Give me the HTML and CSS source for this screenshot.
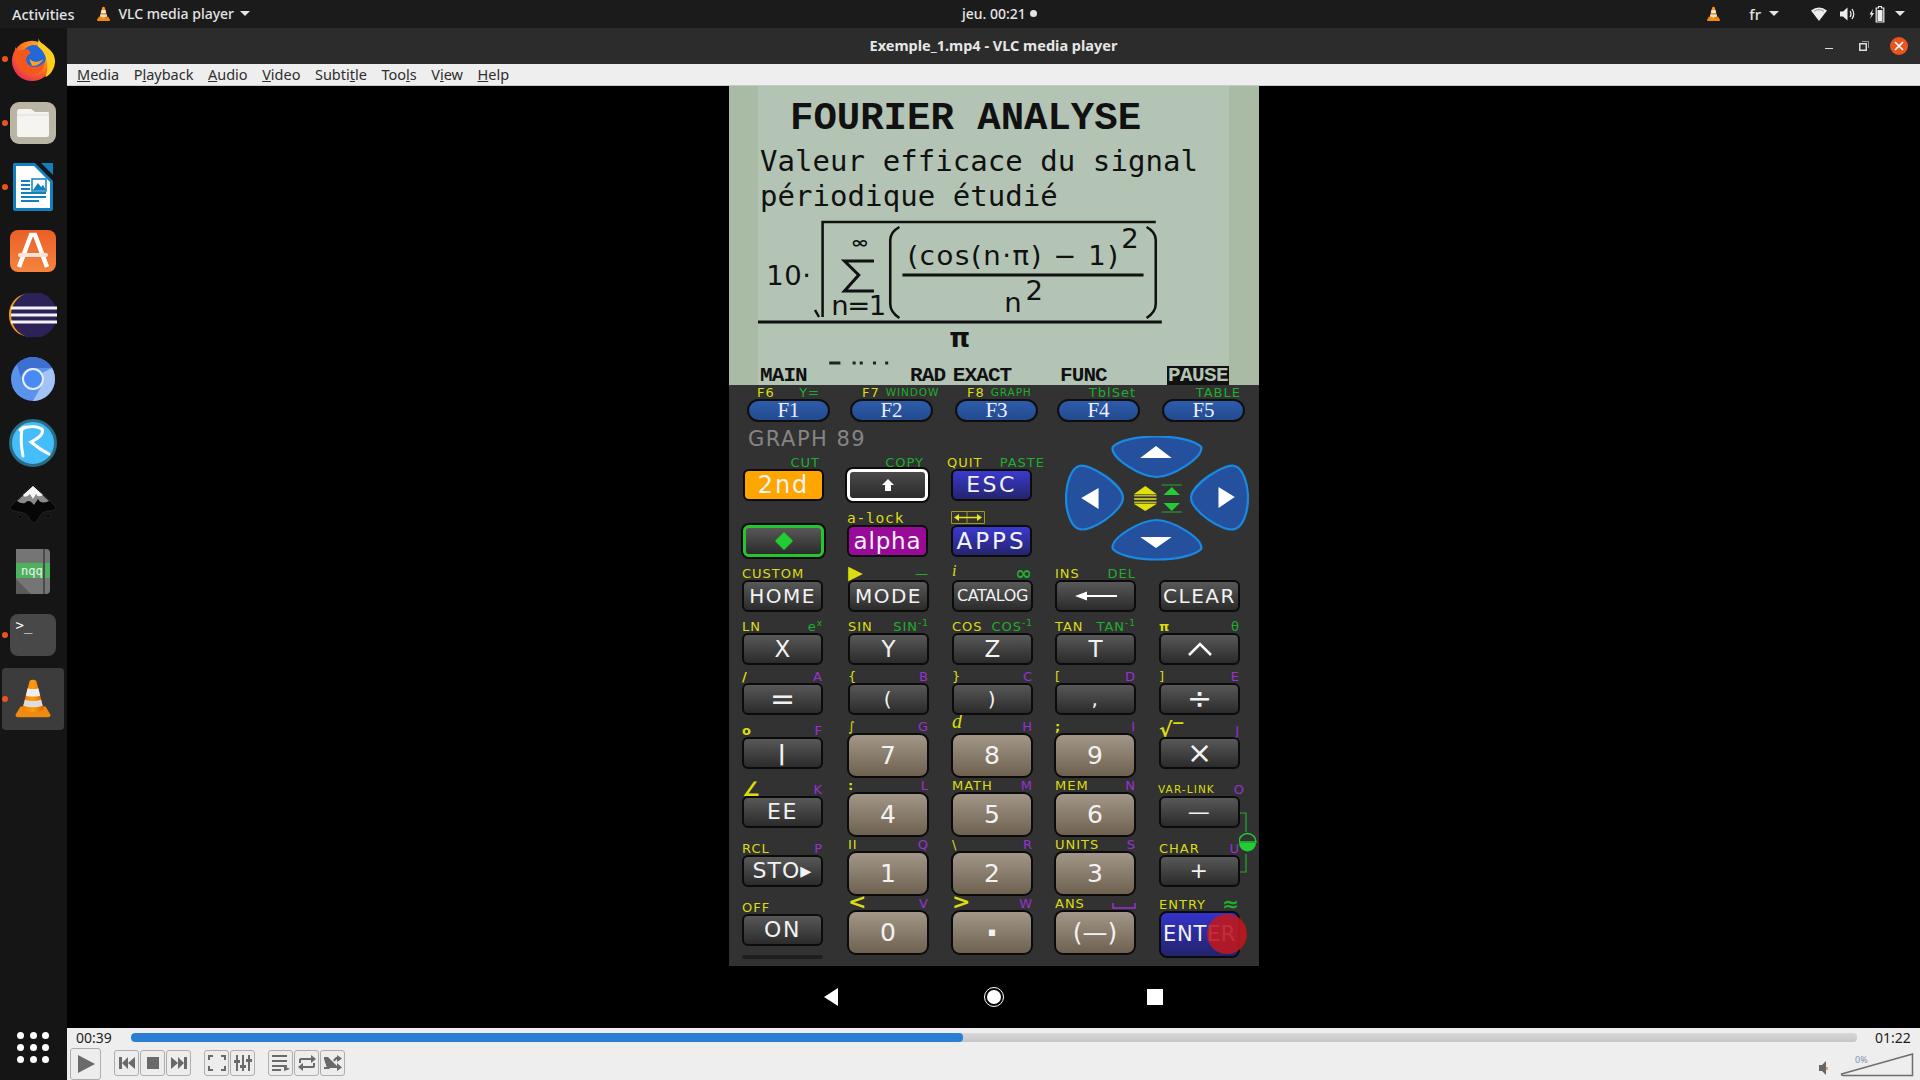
FILE: index.html
```html
<!DOCTYPE html>
<html lang="fr">
<head>
<meta charset="utf-8">
<title>Exemple_1.mp4 - VLC media player</title>
<link rel="stylesheet" href="styles.css">
</head>
<body>
<svg class="defs" width="0" height="0">
  <defs>
    <linearGradient id="cone" x1="0" y1="0" x2="1" y2="0"><stop offset="0" stop-color="#f08000"/><stop offset=".5" stop-color="#ff9a10"/><stop offset="1" stop-color="#d86800"/></linearGradient>
    <radialGradient id="ffx" cx=".7" cy=".25" r=".9"><stop offset="0" stop-color="#ffc21c"/><stop offset=".5" stop-color="#ff7a1a"/><stop offset="1" stop-color="#e3205a"/></radialGradient>
    <linearGradient id="orange" x1="0" y1="0" x2="0" y2="1"><stop offset="0" stop-color="#ea5f27"/><stop offset="1" stop-color="#f5843e"/></linearGradient>
    <symbol id="vlc" viewBox="0 0 48 48">
      <path d="M3 43 L9 33 H39 L45 43 Q45 46 42 46 H6 Q3 46 3 43Z" fill="#f08a10"/>
      <path d="M20 2 Q24 0 28 2 L37 37 Q24 43 11 37Z" fill="url(#cone)"/>
      <path d="M17.600 11 Q24 13 30.400 11 L32.600 20 Q24 22 15.400 20Z" fill="#eee"/>
      <path d="M14.300 25 Q24 28 33.700 25 L35.600 32 Q24 36 12.400 32Z" fill="#ddd"/>
    </symbol>
  </defs>
</svg>

<header class="topbar">
  <div class="top-left">
    <span class="activities">Activities</span>
    <svg class="top-cone" width="15" height="16"><use href="#vlc"/></svg>
    <span>VLC media player</span>
    <span class="caret caret-app"></span>
  </div>
  <div class="clock">jeu. 00:21 <span class="clock-dot"></span></div>
  <div class="top-right">
    <svg class="tr-cone" width="15" height="16"><use href="#vlc"/></svg>
    <span class="tr-fr">fr</span>
    <span class="caret caret-fr"></span>
    <svg class="tr-wifi" width="16" height="14" viewBox="0 0 24 16" preserveAspectRatio="none"><path d="M0 4 Q12 -3 24 4 L12 16Z" fill="#eee"/><path d="M4.500 5 Q12 1 19.500 5" stroke="#777" fill="none"/></svg>
    <svg class="tr-vol" width="15" height="14" viewBox="0 0 15 14"><path d="M0 4.500 H3 L7.500 .500 V13.500 L3 9.500 H0Z" fill="#eee"/><path d="M10 4 Q12 7 10 10 M12 2 Q15.500 7 12 12" stroke="#eee" stroke-width="1.300" fill="none"/></svg>
    <svg class="tr-bat" width="16" height="18" viewBox="0 0 16 18"><path d="M4 4 L0.500 9.500 H2.500 L1 14 L5 8 H3Z" fill="#eee"/><path d="M9.500 1.500 H12.500 V3 H14.800 V17 H7.200 V3 H9.500Z" fill="none" stroke="#eee" stroke-width="1.200"/><rect x="8.500" y="5" width="5" height="11" fill="#eee"/></svg>
    <span class="caret caret-end"></span>
  </div>
</header>

<div class="main">
  <nav class="dock">
    <div class="dock-item running">
      <svg width="46" height="46" viewBox="0 0 48 48"><circle cx="23" cy="26" r="21" fill="url(#ffx)"/><circle cx="25" cy="22" r="12.500" fill="#2468d8"/><path d="M30 2 C30 10 47 12 47 26 C47 33 43 40 37 43 C42 30 37 16 29 11Z" fill="#ffcc1f"/><path d="M6 11 C6 18 14 13 19 14 L22 18 C15 20 15 30 23 32 C28 33 33 31 36 27 C36 36 28 41 20 40 C9 38 2 24 6 11Z" fill="#f4581e"/><path d="M20 24 Q27 30 35 24 Q30 32 23 31Z" fill="#ffa01f"/></svg>
    </div>
    <div class="dock-item running">
      <svg width="46" height="42" viewBox="0 0 46 42"><rect width="46" height="42" rx="9" fill="#b9b4a4"/><path d="M7 10 Q7 7 10 7 H21 L25 10 H38 Q39 10 39 12 V33 Q39 35 37 35 H9 Q7 35 7 33Z" fill="#f6f4f1"/><path d="M7 13 H39" stroke="#e0ddd6"/></svg>
    </div>
    <div class="dock-item running">
      <svg width="40" height="48" viewBox="0 0 40 48"><path d="M1 0 H22 L40 18 V46 Q40 48 38 48 H2 Q0 48 0 46 V1Z" fill="#1280bf"/><path d="M3 3 H21 L37 19 V45 H3Z" fill="#fff"/><path d="M28 0 H40 V12Z" fill="#1280bf"/><path d="M8 18 H17 M8 22 H17 M8 26 H17 M8 30 H33 M8 34 H33 M8 38 H26" stroke="#1280bf" stroke-width="2"/><rect x="19" y="16" width="14" height="12" fill="#fff" stroke="#1280bf" stroke-width="1.500"/><path d="M20 27 L25 20 L28 24 L30 22 L33 27Z" fill="#1280bf"/></svg>
    </div>
    <div class="dock-item">
      <svg width="46" height="42" viewBox="0 0 46 42"><rect width="46" height="42" rx="8" fill="url(#orange)"/><path d="M9 37 L21 5 H25 L37 37" fill="none" stroke="#fff" stroke-width="4.500"/><path d="M10 25 H36" stroke="#fde4d6" stroke-width="4" stroke-linecap="round"/></svg>
    </div>
    <div class="dock-item">
      <svg width="48" height="44" viewBox="0 0 48 44"><path d="M24 0 C6 0 0 12 0 22 C0 32 6 44 24 44 C12 40 8 32 8 22 C8 12 12 4 24 0Z" fill="#f29a12"/><circle cx="25" cy="22" r="23" fill="#2c2258"/><path d="M2 15 H48 M2 22 H48 M2 29 H48" stroke="#f4f2f8" stroke-width="3"/></svg>
    </div>
    <div class="dock-item">
      <svg width="44" height="44" viewBox="0 0 44 44"><circle cx="22" cy="22" r="22" fill="#5b93ec"/><path d="M6 7 A22 22 0 0 1 41 11 H22 A11 11 0 0 0 12 28Z" fill="#3c6fd0"/><path d="M41 11 A22 22 0 0 1 22 44 L31 28 A11 11 0 0 0 31 16Z" fill="#a3c2f5"/><circle cx="22" cy="22" r="10" fill="#4a8af4" stroke="#e8effb" stroke-width="2"/></svg>
    </div>
    <div class="dock-item">
      <svg width="48" height="48" viewBox="0 0 48 48"><circle cx="24" cy="24" r="22.500" fill="#46bdfb" stroke="#2a6c86" stroke-width="3"/><path d="M14 37 Q11 22 13 10 Q24 5 33 10 Q36 16 22 23 Q30 30 40 35 M11 11 Q14 8 18 8" fill="none" stroke="#fff" stroke-width="3" stroke-linecap="round"/></svg>
    </div>
    <div class="dock-item">
      <svg width="46" height="46" viewBox="0 0 46 46"><path d="M23 0 L46 23 Q46 27 38 27 Q31 28 29 34 Q24 44 19 34 Q17 29 9 28 Q0 27 0 23Z" fill="#060606" stroke="#333" stroke-width=".600"/><path d="M23 2 L39 17 Q31 21 28 15 L24 21 Q19 14 15 19 Q11 20 7 17Z" fill="#8a8a8a"/><path d="M23 2 L33 11 Q28 14 26 10 L23 15 L20 10 Q15 15 13 11Z" fill="#f5f5f5"/><circle cx="10" cy="33" r="2" fill="#060606" stroke="#333" stroke-width=".500"/><circle cx="38" cy="32" r="2" fill="#060606" stroke="#333" stroke-width=".500"/></svg>
    </div>
    <div class="dock-item">
      <svg width="34" height="45" viewBox="0 0 34 45"><path d="M0 0 H30 Q34 0 34 4 V41 Q34 45 30 45 H0Z" fill="#757575"/><path d="M0 30 L15 45 H0Z" fill="#5a5a5a"/><rect y="14" width="34" height="15" fill="#4cb25b"/><path d="M28 0 V45" stroke="#4b4b4b" stroke-width="2"/><text class="nqq" x="5" y="26">nqq</text></svg>
    </div>
    <div class="dock-item running">
      <div class="term">&gt;_</div>
    </div>
    <div class="dock-item running active">
      <svg width="40" height="46"><use href="#vlc"/></svg>
    </div>
    <div class="dock-fill"></div>
    <div class="apps-grid"><i></i><i></i><i></i><i></i><i></i><i></i><i></i><i></i><i></i></div>
  </nav>

  <div class="window">
    <div class="titlebar">
      <span class="title">Exemple_1.mp4 - VLC media player</span>
      <div class="wbtns">
        <span class="w-min"></span>
        <svg class="w-max" width="10" height="10" viewBox="0 0 10 10"><path d="M.750 2.750 H7.250 V9.250 H.750Z" fill="none" stroke="#ddd" stroke-width="1.500"/><path d="M3 .500 H9.500 V7" fill="none" stroke="#999"/></svg>
        <span class="w-close"><svg width="12" height="12" viewBox="0 0 12 12"><path d="M2 2 L10 10 M10 2 L2 10" stroke="#fff" stroke-width="1.700"/></svg></span>
      </div>
    </div>
    <div class="menubar">
      <span><u>M</u>edia</span>
      <span>P<u>l</u>ayback</span>
      <span><u>A</u>udio</span>
      <span><u>V</u>ideo</span>
      <span>Subti<u>t</u>le</span>
      <span>Too<u>l</u>s</span>
      <span>V<u>i</u>ew</span>
      <span><u>H</u>elp</span>
    </div>

    <main class="video">
      <div class="phone">
        <section class="calc">
          <div class="lcd">
            <div class="lcd-inner">
              <div class="lcd-title">FOURIER ANALYSE</div>
              <div class="lcd-line">Valeur efficace du signal</div>
              <div class="lcd-line">périodique étudié</div>
              <svg class="formula" width="471" height="147" viewBox="758 218 463 147" preserveAspectRatio="none">
                <text class="m" x="766" y="285" textLength="44">10·</text>
                <path d="M814 310 L818 317 M821.500 317 V222 H1149" fill="none" stroke="#111" stroke-width="2.500"/>
                <text class="ms" x="849" y="248" textLength="18" lengthAdjust="spacingAndGlyphs">∞</text>
                <path d="M872 261 H843 L857 275 L843 291 H872" fill="none" stroke="#111" stroke-width="3"/>
                <text class="m" x="830" y="315" textLength="54">n=1</text>
                <path d="M897 227 Q888 232 888 240 V304 Q888 312 897 318 M1140 227 Q1149 232 1149 240 V304 Q1149 312 1140 318" fill="none" stroke="#111" stroke-width="2.500"/>
                <text class="m" x="905" y="265" textLength="207">(cos(n·π) − 1)</text>
                <text class="m" x="1115" y="248">2</text>
                <path d="M900 275 H1137" stroke="#111" stroke-width="3"/>
                <text class="m" x="1000" y="312">n</text>
                <text class="m" x="1021" y="300">2</text>
                <path d="M758 322 H1155" stroke="#111" stroke-width="3"/>
                <text class="mb" x="946" y="347">π</text>
                <path d="M828 363 H839 M851 363 H854 M858 363 H861 M871 363 H874 M883 363 H886" stroke="#222" stroke-width="3"/>
              </svg>
              <div class="lcd-status">
                <span>MAIN</span><span>RAD EXACT</span><span>FUNC</span><span class="inv">PAUSE</span>
              </div>
            </div>
          </div>

          <div class="fkeys">
            <div class="cell"><div class="lab pad-a"><span class="y">F6</span><span class="g">Y=</span></div><div class="fk">F1</div></div>
            <div class="cell"><div class="lab pad-b"><span class="y">F7</span><span class="g sm">WINDOW</span></div><div class="fk">F2</div></div>
            <div class="cell"><div class="lab pad-b"><span class="y">F8</span><span class="g sm">GRAPH</span></div><div class="fk">F3</div></div>
            <div class="cell"><div class="lab pad-c"><span class="g">TblSet</span></div><div class="fk">F4</div></div>
            <div class="cell"><div class="lab pad-c"><span class="g">TABLE</span></div><div class="fk">F5</div></div>
          </div>

          <div class="upper">
            <div class="upper-left">
              <div class="brand">GRAPH 89</div>
              <div class="upper-grid">
                <div class="cell"><div class="lab end"><span class="g">CUT</span></div><div class="key orange">2nd</div></div>
                <div class="cell"><div class="lab end"><span class="g">COPY</span></div><div class="key outlined"><svg width="14" height="14" viewBox="0 0 14 14"><path d="M7 1 L13 7 H10 V13 H4 V7 H1Z" fill="#fff"/></svg></div></div>
                <div class="cell cell-wide"><div class="lab"><span class="y">QUIT</span><span class="g">PASTE</span></div><div class="key blue esc">ESC</div></div>
                <div class="cell"><div class="key diamond"><svg width="20" height="20" viewBox="0 0 20 20"><path d="M10 1 L19 10 L10 19 L1 10Z" fill="#22cc33"/></svg></div></div>
                <div class="cell"><div class="lab"><span class="y mono">a-lock</span></div><div class="key purple">alpha</div></div>
                <div class="cell"><div class="lab"><svg width="34" height="13" viewBox="0 0 34 13"><path d="M.500 .500 H33.500 V12.500 H.500Z M16 .500 V12.500" fill="none" stroke="#9a9a20"/><path d="M3 6.500 L8 3 V10Z M31 6.500 L26 3 V10Z" fill="#e6e61e"/><path d="M8 6.500 H26" stroke="#e6e61e" stroke-width="1.500"/></svg></div><div class="key blue apps">APPS</div></div>
              </div>
            </div>
            <svg class="dpad" width="184" height="126" viewBox="1060 436 181 126" preserveAspectRatio="none">
              <g class="dp">
                <path d="M1107 447 C1120 433 1180 433 1194 447 C1196 458 1165 477 1150 477 C1135 477 1104 458 1107 447Z"/>
                <path d="M1074 466 C1085 463 1117 485 1117 498 C1117 511 1085 533 1074 529 C1066 527 1061 512 1061 498 C1061 484 1066 468 1074 466Z"/>
                <path d="M1227 466 C1216 463 1184 485 1184 498 C1184 511 1216 533 1227 529 C1235 527 1240 512 1240 498 C1240 484 1235 468 1227 466Z"/>
                <path d="M1150 520 C1165 520 1196 538 1194 549 C1180 563 1120 563 1107 549 C1104 538 1135 520 1150 520Z"/>
              </g>
              <path d="M1134 458 H1165 L1149.500 446Z M1076 498 L1093 488 V509Z M1211 487 V508 L1227 497Z M1134 537 H1165 L1149.500 548Z" fill="#fff"/>
              <path d="M1139 486 L1128 494 H1150Z M1128 504 H1150 L1139 511Z" fill="#e0e010"/>
              <path d="M1128 495.500 H1150 M1128 499 H1150 M1128 502.500 H1150" stroke="#b8b820" stroke-width="2"/>
              <path d="M1165 487 L1157 495 H1173Z M1157 503 H1173 L1165 511Z" fill="#22cc33"/>
              <path d="M1155 485 H1175 M1155 512 H1175" stroke="#22aa33"/>
            </svg>
          </div>

          <div class="keypad">
            <div class="cell"><div class="lab"><span class="y">CUSTOM</span></div><div class="key">HOME</div></div>
            <div class="cell"><div class="lab"><span class="y tri">▶</span><span class="g">—</span></div><div class="key">MODE</div></div>
            <div class="cell"><div class="lab"><span class="y serif">i</span><span class="g big">∞</span></div><div class="key catalog">CATALOG</div></div>
            <div class="cell"><div class="lab"><span class="y">INS</span><span class="g">DEL</span></div><div class="key"><svg width="42" height="10" viewBox="0 0 42 10"><path d="M0 5 L12 .500 V4 H42 V6 H12 V9.500Z" fill="#fff"/></svg></div></div>
            <div class="cell"><div class="key">CLEAR</div></div>

            <div class="cell"><div class="lab"><span class="y">LN</span><span class="g">e<sup>x</sup></span></div><div class="key letter">X</div></div>
            <div class="cell"><div class="lab"><span class="y">SIN</span><span class="g">SIN<sup>-1</sup></span></div><div class="key letter">Y</div></div>
            <div class="cell"><div class="lab"><span class="y">COS</span><span class="g">COS<sup>-1</sup></span></div><div class="key letter">Z</div></div>
            <div class="cell"><div class="lab"><span class="y">TAN</span><span class="g">TAN<sup>-1</sup></span></div><div class="key letter">T</div></div>
            <div class="cell"><div class="lab"><span class="y bold">π</span><span class="g">θ</span></div><div class="key"><svg width="24" height="14" viewBox="0 0 24 14"><path d="M1 13 L12 2 L23 13" fill="none" stroke="#fff" stroke-width="2.500"/></svg></div></div>

            <div class="cell"><div class="lab"><span class="y bold">/</span><span class="p">A</span></div><div class="key sym">=</div></div>
            <div class="cell"><div class="lab"><span class="y">{</span><span class="p">B</span></div><div class="key">(</div></div>
            <div class="cell"><div class="lab"><span class="y">}</span><span class="p">C</span></div><div class="key">)</div></div>
            <div class="cell"><div class="lab"><span class="y">[</span><span class="p">D</span></div><div class="key">,</div></div>
            <div class="cell"><div class="lab"><span class="y">]</span><span class="p">E</span></div><div class="key sym">÷</div></div>

            <div class="cell"><div class="lab"><span class="y bold">o</span><span class="p">F</span></div><div class="key raised bar">|</div></div>
            <div class="cell"><div class="lab"><span class="y">∫</span><span class="p">G</span></div><div class="key digit">7</div></div>
            <div class="cell"><div class="lab"><span class="y serif big">d</span><span class="p">H</span></div><div class="key digit">8</div></div>
            <div class="cell"><div class="lab"><span class="y bold">;</span><span class="p">I</span></div><div class="key digit">9</div></div>
            <div class="cell"><div class="lab"><span class="y big">√‾</span><span class="p">J</span></div><div class="key raised sym">×</div></div>

            <div class="cell"><div class="lab"><span class="y big">∠</span><span class="p">K</span></div><div class="key raised">EE</div></div>
            <div class="cell"><div class="lab"><span class="y bold">:</span><span class="p">L</span></div><div class="key digit">4</div></div>
            <div class="cell"><div class="lab"><span class="y">MATH</span><span class="p">M</span></div><div class="key digit">5</div></div>
            <div class="cell"><div class="lab"><span class="y">MEM</span><span class="p">N</span></div><div class="key digit">6</div></div>
            <div class="cell"><div class="lab lab-over"><span class="y var">VAR-LINK</span><span class="p">O</span></div><div class="key raised">—</div></div>

            <div class="cell"><div class="lab"><span class="y">RCL</span><span class="p">P</span></div><div class="key raised sto">STO▸</div></div>
            <div class="cell"><div class="lab"><span class="y">II</span><span class="p">Q</span></div><div class="key digit">1</div></div>
            <div class="cell"><div class="lab"><span class="y">\</span><span class="p">R</span></div><div class="key digit">2</div></div>
            <div class="cell"><div class="lab"><span class="y">UNITS</span><span class="p">S</span></div><div class="key digit">3</div></div>
            <div class="cell"><div class="lab"><span class="y">CHAR</span><span class="p">U</span></div><div class="key raised">+</div></div>

            <div class="cell"><div class="lab"><span class="y">OFF</span></div><div class="key raised">ON</div><div class="key-slot"></div></div>
            <div class="cell"><div class="lab"><span class="y tall">&lt;</span><span class="p">V</span></div><div class="key digit">0</div></div>
            <div class="cell"><div class="lab"><span class="y tall">&gt;</span><span class="p">W</span></div><div class="key digit dot">·</div></div>
            <div class="cell"><div class="lab"><span class="y">ANS</span><svg width="24" height="6" viewBox="0 0 24 6"><path d="M1 0 V5 H23 V0" fill="none" stroke="#9a30d6" stroke-width="1.500"/></svg></div><div class="key digit">(—)</div></div>
            <div class="cell"><div class="lab"><span class="y">ENTRY</span><span class="g big">≈</span></div><div class="key enter">ENTER<span class="touch"></span></div></div>

            <svg class="bracket" width="18" height="62" viewBox="0 0 18 62"><path d="M1 1 H7 V20 M7 42 V60 H1" fill="none" stroke="#22aa33" stroke-width="1.200"/><path d="M0 30 A8.500 8.500 0 0 1 17 30Z" fill="none" stroke="#22cc33" stroke-width="1.500"/><path d="M0 31 H17 A8.500 8.500 0 0 1 0 31Z" fill="#22cc33"/></svg>
          </div>
        </section>
        <div class="android">
          <svg width="20" height="20" viewBox="0 0 20 20"><path d="M15 1 V19 L1 10Z" fill="#fff"/></svg>
          <svg width="20" height="20" viewBox="0 0 20 20"><circle cx="10" cy="10" r="9.500" fill="none" stroke="#fff"/><circle cx="10" cy="10" r="7" fill="#fff"/></svg>
          <svg width="20" height="20" viewBox="0 0 20 20"><rect x="2" y="2" width="16" height="16" fill="#fff"/></svg>
        </div>
      </div>
    </main>

    <footer class="controls">
      <div class="seek">
        <span class="time">00:39</span>
        <div class="track"><div class="fill" style="width:48.200%"></div></div>
        <span class="time time-end">01:22</span>
      </div>
      <div class="buttons">
        <div class="cb cb-play"><svg width="20" height="20" viewBox="0 0 20 20"><path d="M2 1 L19 10 L2 19Z"/></svg></div>
        <div class="group">
          <div class="cb"><svg width="16" height="12" viewBox="0 0 16 12"><path d="M0 0 H3 V12 H0Z M3 6 L9 0 V12Z M9 6 L16 0 V12Z"/></svg></div>
          <div class="cb"><svg width="12" height="12" viewBox="0 0 12 12"><rect width="12" height="12"/></svg></div>
          <div class="cb"><svg width="16" height="12" viewBox="0 0 16 12"><path d="M0 0 L7 6 L0 12Z M7 0 L13 6 L7 12Z M13 0 H16 V12 H13Z"/></svg></div>
        </div>
        <div class="group">
          <div class="cb"><svg width="18" height="16" viewBox="0 0 18 16"><path d="M0 5 V0 H5 V2 H2 V5Z M13 0 H18 V5 H16 V2 H13Z M0 11 H2 V14 H5 V16 H0Z M16 11 H18 V16 H13 V14 H16Z"/></svg></div>
          <div class="cb"><svg width="18" height="16" viewBox="0 0 18 16"><path d="M2 0 H4 V16 H2Z M0 5 H6 V8 H0Z M8 0 H10 V16 H8Z M6 10 H12 V13 H6Z M14 0 H16 V16 H14Z M12 4 H18 V7 H12Z"/></svg></div>
        </div>
        <div class="group">
          <div class="cb"><svg width="18" height="16" viewBox="0 0 18 16"><path d="M0 0 H15 V2 H0Z M0 5 H15 V7 H0Z M0 10 H15 V12 H0Z M0 14 H9 V16 H0Z M12 11 L18 14 L12 16Z"/></svg></div>
          <div class="cb"><svg width="18" height="16" viewBox="0 0 18 16"><path d="M1 8 V5 Q1 3 3 3 H13 V0 L18 4 L13 8 V5 H3 V8Z M17 8 V11 Q17 13 15 13 H5 V16 L0 12 L5 8 V11 H15 V8Z"/></svg></div>
          <div class="cb"><svg width="18" height="16" viewBox="0 0 18 16"><path d="M0 2 H4 L13 11 V8 L18 12.500 L13 16 V13 H3 L0 4Z M0 12 H4 L7 9 L8.500 10.500 L5 14 H0Z M9 5 L12 2 H13 V0 L18 3.500 L13 7 V4 L10.500 6.500Z"/></svg></div>
        </div>
        <div class="spacer"></div>
        <svg class="speaker" width="9" height="14" viewBox="0 0 9 14"><path d="M0 4 H3 L7 0 V14 L3 10 H0Z" fill="#666"/><path d="M8 6 V9" stroke="#e98a2a" stroke-width="1.500"/></svg>
        <div class="volume">
          <svg width="74" height="24" viewBox="0 0 74 24"><path d="M1.500 21 L72.500 1 V22.500 H3 Q1.500 22.500 1.500 21Z" fill="none" stroke="#6e6e6e" stroke-width="1.500"/></svg>
          <span class="vol-text">0%</span>
        </div>
      </div>
    </footer>
  </div>
</div>
</body>
</html>
```
FILE: styles.css
```css
* { box-sizing: border-box; }
html, body { margin: 0; height: 100%; }
body {
  width: 1920px; height: 1080px; overflow: hidden;
  display: flex; flex-direction: column;
  background: #000;
  font-family: "Noto Sans", "Open Sans", sans-serif;
}
.defs { position: absolute; }

/* ---- top bar ---- */
.topbar {
  height: 28px; flex: none;
  display: flex; align-items: center;
  background: #1b1b1b; color: #e4e4e4;
  font-size: 14px; font-weight: 500;
  padding-bottom: 1px;
}
.top-left { width: 962px; display: flex; align-items: center; }
.activities { margin-left: 12px; margin-right: 22px; font-size: 14.500px; }
.top-cone { margin-right: 7px; }
.caret {
  width: 0; height: 0;
  border-left: 5px solid transparent; border-right: 5px solid transparent;
  border-top: 5px solid #e4e4e4;
}
.caret-app { margin-left: 6px; }
.clock { display: flex; align-items: center; gap: 4px; }
.clock-dot { width: 7px; height: 7px; border-radius: 50%; background: #e4e4e4; }
.top-right { margin-left: auto; display: flex; align-items: center; padding-right: 15px; }
.tr-fr { margin-left: 28px; font-size: 15px; }
.caret-fr { margin-left: 8px; }
.tr-wifi { margin-left: 32px; }
.tr-vol { margin-left: 13px; }
.tr-bat { margin-left: 14px; }
.caret-end { margin-left: 10px; }

/* ---- layout ---- */
.main { flex: 1; display: flex; min-height: 0; }
.dock {
  width: 67px; flex: none;
  display: flex; flex-direction: column;
  background: #151515;
  padding-bottom: 17px;
}
.dock-item {
  position: relative;
  height: 64px; flex: none;
  display: flex; align-items: center; justify-content: center;
  margin-top: 0; padding-right: 2px;
  top: -1px;
}
.dock-item svg { display: block; }
.dock-item.running::before {
  content: ""; position: absolute; left: 2px; top: 29px;
  width: 6px; height: 6px; border-radius: 50%; background: #e95420;
}
.dock-item.active { margin: 1px 3px 0 2px; padding-right: 0; background: #3c3c3c; border-radius: 4px; height: 62px; }
.dock-item.active::before { left: 0; top: 28px; }
.term {
  width: 46px; height: 42px; border-radius: 8px;
  background: #484848; color: #fff;
  font: 14px/22px "DejaVu Sans Mono", monospace; padding-left: 6px;
}
.nqq { font: 12px "DejaVu Sans Mono", monospace; fill: #f0f0f0; }
.dock-fill { flex: 1; }
.apps-grid {
  width: 32px; margin-left: 17px;
  display: grid; grid-template-columns: repeat(3, 7px); gap: 5px 5.500px;
}
.apps-grid i { width: 7px; height: 7px; border-radius: 50%; background: #fff; }

.window { flex: 1; min-width: 0; display: flex; flex-direction: column; }
.titlebar {
  height: 36px; flex: none;
  display: flex; align-items: center; justify-content: center;
  position: relative;
  background: #2d2c2c; color: #e6e6e6;
  font-size: 14.500px; font-weight: 700;
  padding-bottom: 2px;
}
.wbtns { position: absolute; right: 12px; top: 0; height: 36px; display: flex; align-items: center; }
.w-min { width: 8px; height: 1px; background: #ddd; margin-top: 4px; margin-right: 26px; }
.w-max { margin-right: 21px; }
.w-close {
  width: 18px; height: 18px; border-radius: 50%; background: #e95420;
  display: flex; align-items: center; justify-content: center;
}
.menubar {
  height: 22px; flex: none;
  display: flex; align-items: center; gap: 14.500px;
  padding-left: 10px; padding-bottom: 2px;
  background: #eeeeee; color: #2e2e2e;
  border-bottom: 1px solid #c9c9c9;
  font-size: 14.500px;
}
.video { flex: 1; min-height: 0; display: flex; justify-content: center; background: #000; }
.phone { width: 530px; margin-left: 1px; display: flex; flex-direction: column; }

/* ---- calculator ---- */
.calc {
  height: 880px; flex: none;
  display: flex; flex-direction: column;
  background: #323232;
  font-family: "DejaVu Sans", sans-serif;
  position: relative;
}
.lcd { height: 299px; flex: none; background: #a9bba4; padding-left: 29px; }
.lcd-inner { width: 471px; height: 299px; background: #b3c4b5; display: flex; flex-direction: column; color: #111; }
.lcd-title {
  font: 700 39px/40px "Liberation Mono", monospace;
  margin: 13px 0 5px 32px; white-space: nowrap;
}
.lcd-line { font: 29px/35px "DejaVu Sans Mono", monospace; white-space: pre; padding-left: 2px; letter-spacing: .06px; }
.formula { display: block; margin-top: 3.500px; flex: none; }
.m { font: 27px "DejaVu Sans", sans-serif; fill: #111; }
.ms { font: 700 16px "DejaVu Sans", sans-serif; fill: #111; }
.mb { font: 700 26px "DejaVu Sans", sans-serif; fill: #111; }
.lcd-status {
  display: grid; grid-template-columns: 150px 150px 107px 62px;
  padding-left: 2px; margin-top: 1px;
  font: 700 21px/19px "Liberation Mono", monospace;
  letter-spacing: -.9px; word-spacing: -4px;
  white-space: nowrap;
}
.inv { background: #111; color: #b3c4b5; letter-spacing: -.6px; padding-left: 1px; }

.cell { width: 81px; display: flex; flex-direction: column; justify-content: flex-end; }
.lab {
  height: 14px; flex: none;
  display: flex; justify-content: space-between; align-items: flex-end;
  font-size: 13px; line-height: 13px; letter-spacing: 1px;
  white-space: nowrap;
}
.lab.end { justify-content: flex-end; padding-right: 4px; }
.lab svg { display: block; margin-bottom: 1px; }
.y { color: #dcdc10; }
.g { color: #1fae2e; }
.p { color: #9a30d6; }
.sm { font-size: 10.500px; letter-spacing: .9px; }
.var { font-size: 10.500px; letter-spacing: 1.100px; }
.lab-over { width: 87px; margin-left: -1px; }
.big { font-size: 20px; font-weight: 700; }
.tall { font-size: 22px; font-weight: 700; line-height: 16px; }
.tri { font-size: 19px; line-height: 16px; }
.bold { font-weight: 700; }
.mono { font-family: "DejaVu Sans Mono", monospace; font-size: 14.500px; letter-spacing: .8px; }
.serif { font: italic 16px "Liberation Serif", serif; }
.serif.big { font-size: 20px; font-weight: 400; }
sup { font-size: 9px; line-height: 0; vertical-align: 5px; }

.fkeys {
  height: 38px; flex: none; padding-left: 18px;
  display: grid; grid-template-columns: 103px 105px 102px 105px 83px;
  align-items: end; padding-bottom: 1px;
}
.fkeys .cell { width: 83px; }
.pad-a { padding: 0 10px; }
.pad-b { padding: 0 0 0 12px; gap: 6px; justify-content: flex-start; white-space: nowrap; width: 92px; }
.pad-c { justify-content: flex-end; padding-right: 4px; }
.fk {
  height: 23px; border-radius: 12px;
  background: linear-gradient(#2d5cab, #234a8e);
  border: 2px solid #0e0e0e;
  color: #eef; text-align: center;
  font: 21px/18px "Liberation Serif", serif;
}
.upper { height: 139px; flex: none; display: flex; padding-left: 14px; }
.upper-left { width: 322px; flex: none; }
.brand { height: 33px; padding: 4px 0 0 5px; color: #858585; font-size: 21px; line-height: 24px; letter-spacing: 1.500px; }
.upper-grid {
  display: grid; grid-template-columns: 104px 104px 82px;
  grid-template-rows: 45px 56px;
}
.cell-wide .lab { width: 98px; margin-left: -4px; }
.dpad { display: block; margin-top: 13px; }
.dp path { fill: #24509e; stroke: #1a8ae0; stroke-width: 2.200; }

.key {
  height: 32px; flex: none;
  border: 2px solid #0b0b0b; border-radius: 6px;
  background: linear-gradient(#585858, #2b2b2b);
  color: #f2f2f2;
  display: flex; align-items: center; justify-content: center;
  font-size: 20px; letter-spacing: 1.500px; line-height: 1;
  position: relative;
  white-space: nowrap;
}
.key.raised { margin-bottom: 9px; font-size: 22px; }
.key.letter { font-size: 23px; letter-spacing: 0; }
.key.sym, .key.raised.sym { font-size: 30px; letter-spacing: 0; }
.key.bar { font-weight: 700; }
.key.orange { background: #ffa500; font-size: 24px; letter-spacing: 2px; }
.key.outlined { background: linear-gradient(#4a4a4a, #2b2b2b); border: 3px solid #fff; box-shadow: 0 0 0 2px #0b0b0b; }
.key.blue { background: linear-gradient(#3a3ad0, #24246c); }
.key.esc { font-size: 22px; letter-spacing: 2.500px; }
.key.apps { font-size: 23px; letter-spacing: 3px; }
.key.purple { background: #980b98; font-size: 23px; letter-spacing: .8px; }
.key.diamond { background: linear-gradient(#585858, #2b2b2b); border: 3px solid #25c52f; box-shadow: 0 0 0 2px #0b0b0b; }
.key.catalog { font-size: 16px; letter-spacing: -.4px; }
.key.sto { letter-spacing: 1px; }
.key.digit {
  height: 45px; border-radius: 9px;
  background: linear-gradient(#a29788, #6e6150);
  font-size: 25px; letter-spacing: 0;
  margin-left: -1px;
}
.key.dot { font-size: 34px; font-weight: 700; }
.key.enter {
  height: 47px; margin-bottom: -3px; border-radius: 8px;
  background: linear-gradient(#3333cc, #23236b);
  font-size: 21px; letter-spacing: .7px; justify-content: flex-start; padding-left: 2px;
}
.touch {
  position: absolute; left: 46px; top: 1px;
  width: 40px; height: 40px; border-radius: 50%;
  background: rgba(190, 24, 32, .9);
}
.key-slot { height: 4px; margin-bottom: -4px; background: #1e1e1e; border-radius: 2px; }
.keypad {
  height: 403px; flex: none; padding-left: 13px;
  position: relative;
  display: grid;
  grid-template-columns: 106px 104px 103px 104px 81px;
  grid-template-rows: 50px 53px 50px 63px 59px 59px 59px;
  align-content: start;
}
.bracket { position: absolute; left: 510px; top: 250px; }

/* ---- android nav ---- */
.android {
  height: 62px; flex: none;
  display: flex; align-items: center; justify-content: center; gap: 141px;
}

/* ---- controls ---- */
.controls {
  height: 52px; flex: none;
  background: #eeeeee;
  display: flex; flex-direction: column;
}
.seek { height: 18px; flex: none; display: flex; align-items: center; padding: 0 8px 0 9px; gap: 18px; }
.time { font-size: 14px; color: #1e1e1e; width: 37px; }
.track { flex: 1; height: 9px; border-radius: 4px; background: linear-gradient(#d8d8d8, #c6c6c6); overflow: hidden; }
.fill { height: 100%; background: #2a7fd5; border-radius: 4px; }
.buttons { flex: 1; display: flex; align-items: center; padding-left: 3px; gap: 13px; }
.group { display: flex; gap: 1px; }
.cb {
  width: 25px; height: 26px;
  border: 1px solid #aeaeae; border-radius: 3px;
  display: flex; align-items: center; justify-content: center;
  background: #ededed;
}
.cb svg { fill: #6a6a6a; display: block; }
.cb-play { width: 31px; height: 32px; margin-top: 1px; }
.spacer { flex: 1; }
.speaker { margin-top: 10px; margin-right: -1px; }
.volume { position: relative; width: 74px; height: 24px; margin-right: 6px; margin-top: 4px; }
.vol-text { position: absolute; left: 15px; top: 0; font-size: 9px; color: #7f93ac; }
```
